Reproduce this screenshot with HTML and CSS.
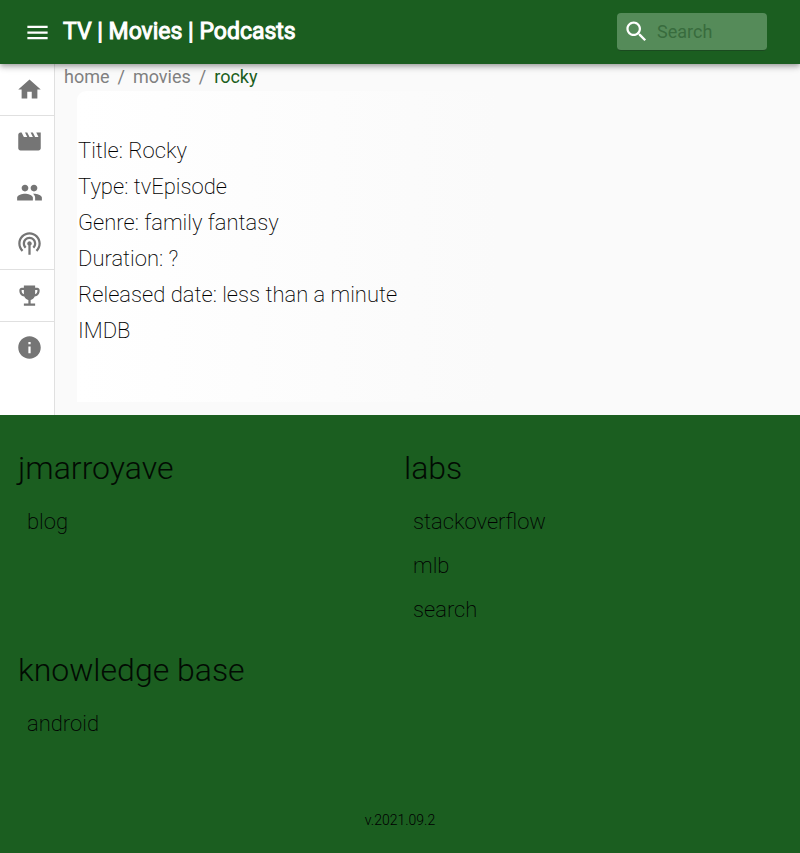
FILE: index.html
```html
<!DOCTYPE html>
<html lang="en">
<head>
<meta charset="utf-8">
<meta name="viewport" content="width=device-width, initial-scale=1">
<title>TV | Movies | Podcasts</title>
<link rel="stylesheet" href="styles.css">
</head>
<body>
<header class="bar">
  <button class="menu" type="button" aria-label="Menu">
    <svg class="icon" viewBox="0 0 24 24"><path d="M3 18h18v-2H3v2zm0-5h18v-2H3v2zm0-7v2h18V6H3z"/></svg>
  </button>
  <h1 class="brand">TV | Movies | Podcasts</h1>
  <label class="search">
    <svg class="icon" viewBox="0 0 24 24" aria-hidden="true"><path d="M15.5 14h-.79l-.28-.27C15.41 12.59 16 11.11 16 9.5 16 5.91 13.09 3 9.5 3S3 5.91 3 9.5 5.91 16 9.5 16c1.61 0 3.09-.59 4.23-1.57l.27.28v.79l5 4.99L20.49 19l-4.99-5zm-6 0C7.01 14 5 11.99 5 9.5S7.01 5 9.5 5 14 7.01 14 9.5 11.99 14 9.5 14z"/></svg>
    <input class="search-input" type="search" placeholder="Search" aria-label="Search">
  </label>
</header>
<div class="shell">
  <nav class="side" aria-label="Sections">
    <a class="side-link" href="#home" aria-label="Home"><svg class="icon" viewBox="0 0 24 24"><path d="M10 20v-6h4v6h5v-8h3L12 3 2 12h3v8z"/></svg></a>
    <a class="side-link ruled" href="#movies" aria-label="Movies"><svg class="icon" viewBox="0 0 24 24"><path d="M18 4l2 4h-3l-2-4h-2l2 4h-3l-2-4H8l2 4H7L5 4H4c-1.1 0-1.99.9-1.99 2L2 18c0 1.1.9 2 2 2h16c1.1 0 2-.9 2-2V4h-4z"/></svg></a>
    <a class="side-link" href="#people" aria-label="People"><svg class="icon" viewBox="0 0 24 24"><path d="M16 11c1.66 0 2.99-1.34 2.99-3S17.66 5 16 5c-1.66 0-3 1.34-3 3s1.34 3 3 3zm-8 0c1.66 0 2.99-1.34 2.99-3S9.66 5 8 5C6.34 5 5 6.34 5 8s1.34 3 3 3zm0 2c-2.33 0-7 1.17-7 3.5V19h14v-2.500c0-2.330-4.670-3.500-7-3.500zm8 0c-.29 0-.62.02-.97.05 1.16.84 1.970 1.970 1.970 3.450V19h6v-2.500c0-2.330-4.670-3.500-7-3.500z"/></svg></a>
    <a class="side-link" href="#podcasts" aria-label="Podcasts"><svg class="icon" viewBox="0 0 24 24"><path d="M14 12c0 .74-.4 1.380-1 1.720V22h-2v-8.280c-.6-.35-1-.98-1-1.720 0-1.100.9-2 2-2s2 .9 2 2zm-2-6c-3.310 0-6 2.690-6 6 0 1.740.75 3.310 1.940 4.400l1.420-1.420C8.530 14.250 8 13.190 8 12c0-2.210 1.790-4 4-4s4 1.790 4 4c0 1.190-.53 2.250-1.360 2.980l1.420 1.420C17.250 15.310 18 13.740 18 12c0-3.310-2.690-6-6-6zm0-4C6.480 2 2 6.480 2 12c0 2.850 1.200 5.410 3.110 7.240l1.420-1.420C4.980 16.360 4 14.290 4 12c0-4.410 3.590-8 8-8s8 3.590 8 8c0 2.290-.98 4.360-2.530 5.820l1.420 1.420C20.800 17.410 22 14.850 22 12c0-5.520-4.480-10-10-10z"/></svg></a>
    <a class="side-link ruled" href="#awards" aria-label="Awards"><svg class="icon" viewBox="0 0 24 24"><path d="M19 5h-2V3H7v2H5c-1.100 0-2 .9-2 2v1c0 2.550 1.920 4.630 4.390 4.940.63 1.500 1.980 2.630 3.610 2.960V19H7v2h10v-2h-4v-3.100c1.630-.33 2.980-1.460 3.610-2.960C19.080 12.630 21 10.550 21 8V7c0-1.100-.9-2-2-2zM5 8V7h2v3.820C5.840 10.400 5 9.300 5 8zm14 0c0 1.300-.84 2.400-2 2.820V7h2v1z"/></svg></a>
    <a class="side-link ruled" href="#about" aria-label="About"><svg class="icon" viewBox="0 0 24 24"><path d="M12 2C6.480 2 2 6.480 2 12s4.480 10 10 10 10-4.480 10-10S17.520 2 12 2zm1 15h-2v-6h2v6zm0-8h-2V7h2v2z"/></svg></a>
  </nav>
  <main class="main">
    <nav aria-label="Breadcrumb">
      <ol class="crumbs">
        <li><a href="#home">home</a></li>
        <li aria-hidden="true">/</li>
        <li><a href="#movies">movies</a></li>
        <li aria-hidden="true">/</li>
        <li><a class="current" href="#rocky" aria-current="page">rocky</a></li>
      </ol>
    </nav>
    <article class="card">
      <p>Title: Rocky</p>
      <p>Type: tvEpisode</p>
      <p>Genre: family fantasy</p>
      <p>Duration: ?</p>
      <p>Released date: less than a minute</p>
      <p><a href="#imdb">IMDB</a></p>
    </article>
  </main>
</div>
<footer class="footer">
  <div class="groups">
    <section>
      <h2>jmarroyave</h2>
      <ul><li><a href="#blog">blog</a></li></ul>
    </section>
    <section>
      <h2>labs</h2>
      <ul>
        <li><a href="#stackoverflow">stackoverflow</a></li>
        <li><a href="#mlb">mlb</a></li>
        <li><a href="#search">search</a></li>
      </ul>
    </section>
    <section>
      <h2>knowledge base</h2>
      <ul><li><a href="#android">android</a></li></ul>
    </section>
  </div>
  <p class="version">v.2021.09.2</p>
</footer>
</body>
</html>
```
FILE: styles.css
```css
* { box-sizing: border-box; }

body {
  margin: 0;
  min-height: 100vh;
  display: flex;
  flex-direction: column;
  background: #fafafa;
  color: #000;
  font: 200 22px/36px Roboto, sans-serif;
}

h1, h2, p, ul, ol { margin: 0; padding: 0; }
ul, ol { list-style: none; }
a { color: inherit; text-decoration: none; }

.icon {
  display: block;
  flex: none;
  width: 27px;
  height: 27px;
  fill: currentColor;
}

.bar {
  position: relative;
  z-index: 1;
  display: flex;
  align-items: center;
  height: 64px;
  padding: 0 33px 0 24px;
  background: #1b5e20;
  color: #fff;
  box-shadow: 0 2px 4px -1px rgba(0, 0, 0, .2), 0 4px 5px 0 rgba(0, 0, 0, .14), 0 1px 10px 0 rgba(0, 0, 0, .12);
}

.menu {
  padding: 0;
  border: 0;
  background: none;
  color: inherit;
}

.brand {
  flex: 1;
  padding-left: 12px;
  font-size: 23px;
  font-weight: 400;
  line-height: 36px;
  -webkit-text-stroke: 1px currentColor;
}

.search {
  display: flex;
  align-items: center;
  width: 150px;
  height: 38px;
  padding-left: 6px;
  border-bottom: 1px solid #1b4a20;
  border-radius: 4px;
  background: #558b59;
}

.search-input {
  flex: 1;
  min-width: 0;
  padding: 0 0 0 7px;
  border: 0;
  outline: 0;
  background: none;
  color: #fff;
  font: 400 18px/36px Roboto, sans-serif;
}

.search-input::placeholder { color: #386c3d; opacity: 1; }

.shell { display: flex; }

.side {
  flex: none;
  width: 55px;
  border-right: 1px solid #e0e0e0;
  background: #fff;
  color: #757575;
}

.side-link {
  display: block;
  padding: 12px 0 12px 16px;
}

.ruled { border-top: 1px solid #e0e0e0; }

.main {
  flex: 1;
  min-width: 0;
  padding-bottom: 13px;
}

.crumbs {
  display: flex;
  gap: 8px;
  padding: 0 0 2px 9px;
  color: #808080;
  font-size: 18px;
  font-weight: 400;
  line-height: 25px;
}

.current { color: #1b5e20; }

.card {
  margin: 0 22px;
  padding: 42px 0 53px 1px;
  border-radius: 9px 0 0 0;
  background: linear-gradient(to right, #fff, #fafafa 60%);
}

.footer {
  flex: 1;
  padding: 35px 10px 15px 18px;
  background: #1b5e20;
}

.groups {
  display: grid;
  grid-template-columns: 1fr 1fr;
  row-gap: 16px;
}

h2 {
  margin-bottom: 18px;
  font-size: 32px;
  font-weight: 300;
  line-height: 36px;
}

.footer h2 { color: #020b03; }

.footer li { height: 44px; padding-left: 9px; }

.version {
  margin-top: 61px;
  padding-right: 8px;
  font-size: 14px;
  font-weight: 300;
  line-height: 18px;
  text-align: center;
}
```
